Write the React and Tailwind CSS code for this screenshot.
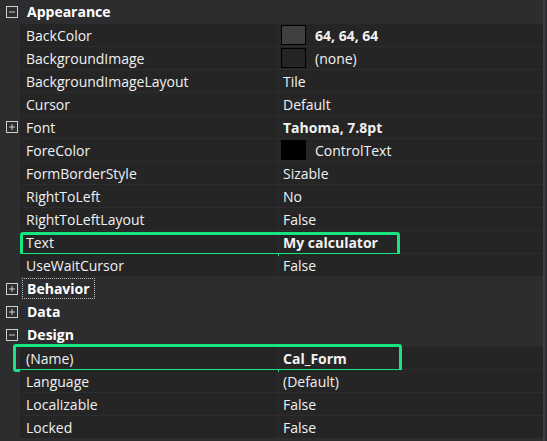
import React from "react";

const font = { fontFamily: '"Open Sans", "Noto Sans", sans-serif' };

const ExpandBox = ({ open }) => (
  <svg width="12" height="12" viewBox="0 0 12 12" className="shrink-0">
    <rect x="0.5" y="0.5" width="11" height="11" fill="none" stroke="#d0d0d0" />
    <line x1="3" y1="6" x2="9" y2="6" stroke="#d0d0d0" />
    {!open && <line x1="6" y1="3" x2="6" y2="9" stroke="#d0d0d0" />}
  </svg>
);

const Category = ({ label, open, focused }) => (
  <div className="h-[23px] flex items-center">
    <div className="w-[20px] pl-[6px] flex items-center">
      <ExpandBox open={open} />
    </div>
    <span
      className={`ml-[2px] px-[4px] h-[21px] flex items-center font-bold text-[14px] text-white ${
        focused ? "border border-dotted border-[#bdbdbd]" : "border border-transparent"
      }`}
    >
      {label}
    </span>
  </div>
);

const Swatch = ({ color }) => (
  <span
    className="w-[25px] h-[20px] border border-black shrink-0"
    style={{ backgroundColor: color }}
  />
);

const Row = ({ name, value, bold, swatch, expand, highlight }) => (
  <div className="relative h-[22px] flex">
    <div className="w-[20px] pl-[6px] flex items-center">
      {expand && <ExpandBox open={false} />}
    </div>
    <div className="w-[258px] bg-[#252526] pl-[6px] flex items-center text-[14px] text-[#f1f1f1]">
      {name}
    </div>
    <div className="flex-1 ml-px bg-[#252526] flex items-center text-[14px] text-[#f1f1f1]">
      {swatch ? (
        <div className="flex items-center pl-[2px] gap-[9px]">
          <Swatch color={swatch} />
          <span className={bold ? "font-bold" : ""}>{value}</span>
        </div>
      ) : (
        <span className={`pl-[4px] ${bold ? "font-bold" : ""}`}>{value}</span>
      )}
    </div>
    {highlight === "text" && (
      <div className="absolute left-[20px] top-[1px] w-[380px] h-[24px] border-[3px] border-[#17e680] rounded-[3px]" />
    )}
    {highlight === "name" && (
      <div className="absolute left-[13px] top-[-3px] w-[389px] h-[28px] border-[3px] border-[#17e680] rounded-[3px]" />
    )}
  </div>
);

export default function App() {
  return (
    <div className="w-[547px] h-[441px] bg-[#2d2d30] flex overflow-hidden" style={font}>
      <div className="w-[543px] flex flex-col">
        <Category label="Appearance" open />
        <div className="flex flex-col gap-px mt-px">
          <Row name="BackColor" value="64, 64, 64" bold swatch="#404040" />
          <Row name="BackgroundImage" value="(none)" swatch="#252526" />
          <Row name="BackgroundImageLayout" value="Tile" />
          <Row name="Cursor" value="Default" />
          <Row name="Font" value="Tahoma, 7.8pt" bold expand />
          <Row name="ForeColor" value="ControlText" swatch="#000000" />
          <Row name="FormBorderStyle" value="Sizable" />
          <Row name="RightToLeft" value="No" />
          <Row name="RightToLeftLayout" value="False" />
          <Row name="Text" value="My calculator" bold highlight="text" />
          <Row name="UseWaitCursor" value="False" />
        </div>
        <div className="mt-px">
          <Category label="Behavior" focused />
          <Category label="Data" />
          <Category label="Design" open />
        </div>
        <div className="flex flex-col gap-px mt-px">
          <Row name="(Name)" value="Cal_Form" bold highlight="name" />
          <Row name="Language" value="(Default)" />
          <Row name="Localizable" value="False" />
          <Row name="Locked" value="False" />
        </div>
      </div>
      <div className="w-[2px] bg-[#3e3e42]" />
      <div className="w-[2px] bg-[#2d2d30]" />
    </div>
  );
}
